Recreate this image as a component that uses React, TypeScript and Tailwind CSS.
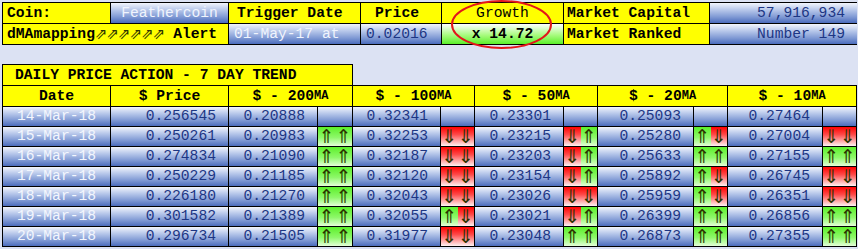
import React from "react";

type Dir = "u" | "d";

const rows: { date: string; price: string; ma: string[]; arrows: string[] | null }[] = [
  { date: "14-Mar-18", price: "0.256545", ma: ["0.20888", "0.32341", "0.23301", "0.25093", "0.27464"], arrows: null },
  { date: "15-Mar-18", price: "0.250261", ma: ["0.20983", "0.32253", "0.23215", "0.25280", "0.27004"], arrows: ["uu", "dd", "du", "ud", "dd"] },
  { date: "16-Mar-18", price: "0.274834", ma: ["0.21090", "0.32187", "0.23203", "0.25633", "0.27155"], arrows: ["uu", "dd", "du", "uu", "uu"] },
  { date: "17-Mar-18", price: "0.250229", ma: ["0.21185", "0.32120", "0.23154", "0.25892", "0.26745"], arrows: ["uu", "dd", "du", "ud", "dd"] },
  { date: "18-Mar-18", price: "0.226180", ma: ["0.21270", "0.32043", "0.23026", "0.25959", "0.26351"], arrows: ["uu", "dd", "dd", "ud", "dd"] },
  { date: "19-Mar-18", price: "0.301582", ma: ["0.21389", "0.32055", "0.23021", "0.26399", "0.26856"], arrows: ["uu", "ud", "du", "uu", "uu"] },
  { date: "20-Mar-18", price: "0.296734", ma: ["0.21505", "0.31977", "0.23048", "0.26873", "0.27355"], arrows: ["uu", "dd", "uu", "uu", "uu"] },
];

const maNames = ["200", "100", "50", "20", "10"];

const yellow = "bg-[#ffff00] text-black font-bold";
const blue = "bg-[linear-gradient(to_bottom,#f2f5fc,#b7c7ea_35%,#7f99d4_70%,#4b6cbc)]";
const green = "bg-[linear-gradient(to_bottom,#ffffff,#a8fb80_55%,#5cf02a)]";
const red = "bg-[linear-gradient(to_bottom,#ff0000,#ff4a4a_40%,#fff2f2)]";
const arrowGreen = "bg-[linear-gradient(to_bottom,#5cf02a,#8ef86a_55%,#e4ffd8)]";

function Half({ d }: { d: Dir }) {
  return (
    <div
      className={`flex-1 flex items-center justify-center font-['DejaVu_Sans',sans-serif] text-[19px] text-[#2c3300] ${
        d === "u" ? arrowGreen : red
      }`}
    >
      {d === "u" ? "⇑" : "⇓"}
    </div>
  );
}

/* ── top summary box ── */
function Summary() {
  return (
    <div className="ml-[2px] mt-[2px] w-[855px] grid grid-cols-[107px_117px_131px_80px_121px_145px_147px] grid-rows-[20px_20px] gap-px p-px bg-black">
      <div className={`${yellow} flex items-center pl-1`}>Coin:</div>
      <div className={`${blue} flex items-center justify-center text-[#f0f4fd]`}>Feathercoin</div>
      <div className={`${yellow} flex items-center pl-2`}>Trigger Date</div>
      <div className={`${yellow} flex items-center pl-[14px]`}>Price</div>
      <div className={`${yellow} flex items-center justify-center font-normal`}>Growth</div>
      <div className={`${yellow} flex items-center pl-[3px]`}>Market Capital</div>
      <div className={`${blue} flex items-center justify-end pr-3 text-[#1d3684]`}>57,916,934</div>

      <div className={`${yellow} col-span-2 flex items-center pl-1 whitespace-pre`}>
        dMAmapping<span className="font-['DejaVu_Sans',sans-serif] text-[15px] font-normal text-[#2c3300] tracking-[-1px]">⇗⇗⇗⇗⇗⇗</span> Alert
      </div>
      <div className={`${blue} flex items-center pl-[5px] text-[#f0f4fd]`}>01-May-17 at</div>
      <div className={`${blue} flex items-center pl-[5px] text-[#1d3684]`}>0.02016</div>
      <div className={`${green} flex items-center justify-center font-bold text-black`}>x 14.72</div>
      <div className={`${yellow} flex items-center pl-[3px]`}>Market Ranked</div>
      <div className={`${blue} flex items-center justify-end pr-3 text-[#1d3684]`}>Number 149</div>
    </div>
  );
}

/* ── 7 day trend table ── */
function Trend() {
  return (
    <div className="ml-[2px] mt-[19px]">
      <div className={`${yellow} w-[351px] h-[21px] border-t border-x border-black flex items-center pl-3`}>
        DAILY PRICE ACTION - 7 DAY TREND
      </div>
      <div className="w-[855px] grid grid-cols-[107px_117px_88px_34px_87px_33px_88px_33px_95px_33px_94px_33px] grid-rows-[20px_repeat(7,19px)] gap-px p-px bg-black">
        <div className={`${yellow} flex items-center justify-center`}>Date</div>
        <div className={`${yellow} flex items-center justify-center`}>$ Price</div>
        {maNames.map((m) => (
          <div key={m} className={`${yellow} col-span-2 flex items-center justify-center whitespace-pre`}>
            $ - {m}
            <span className="text-[12px]">MA</span>
          </div>
        ))}

        {rows.map((r) => (
          <React.Fragment key={r.date}>
            <div className={`${blue} flex items-center justify-center text-[#f3f6fd]`}>{r.date}</div>
            <div className={`${blue} flex items-center justify-end pr-3 text-[#1d3684]`}>{r.price}</div>
            {r.ma.map((v, i) => (
              <React.Fragment key={i}>
                <div className={`${blue} flex items-center justify-end pr-3 text-[#1d3684]`}>{v}</div>
                {r.arrows ? (
                  <div className="flex">
                    <Half d={r.arrows[i][0] as Dir} />
                    <Half d={r.arrows[i][1] as Dir} />
                  </div>
                ) : (
                  <div className={blue} />
                )}
              </React.Fragment>
            ))}
          </React.Fragment>
        ))}
      </div>
    </div>
  );
}

export default function App() {
  return (
    <div className="relative w-[858px] h-[249px] overflow-hidden bg-[#dce2f3] font-['Liberation_Mono','Courier_New',monospace] text-[14.67px] leading-none">
      <Summary />
      <Trend />
      <svg className="absolute left-0 top-0 pointer-events-none" width="858" height="249">
        <ellipse cx="501.5" cy="24.5" rx="49.5" ry="23.5" fill="none" stroke="#e3161b" strokeWidth="2" />
      </svg>
    </div>
  );
}
